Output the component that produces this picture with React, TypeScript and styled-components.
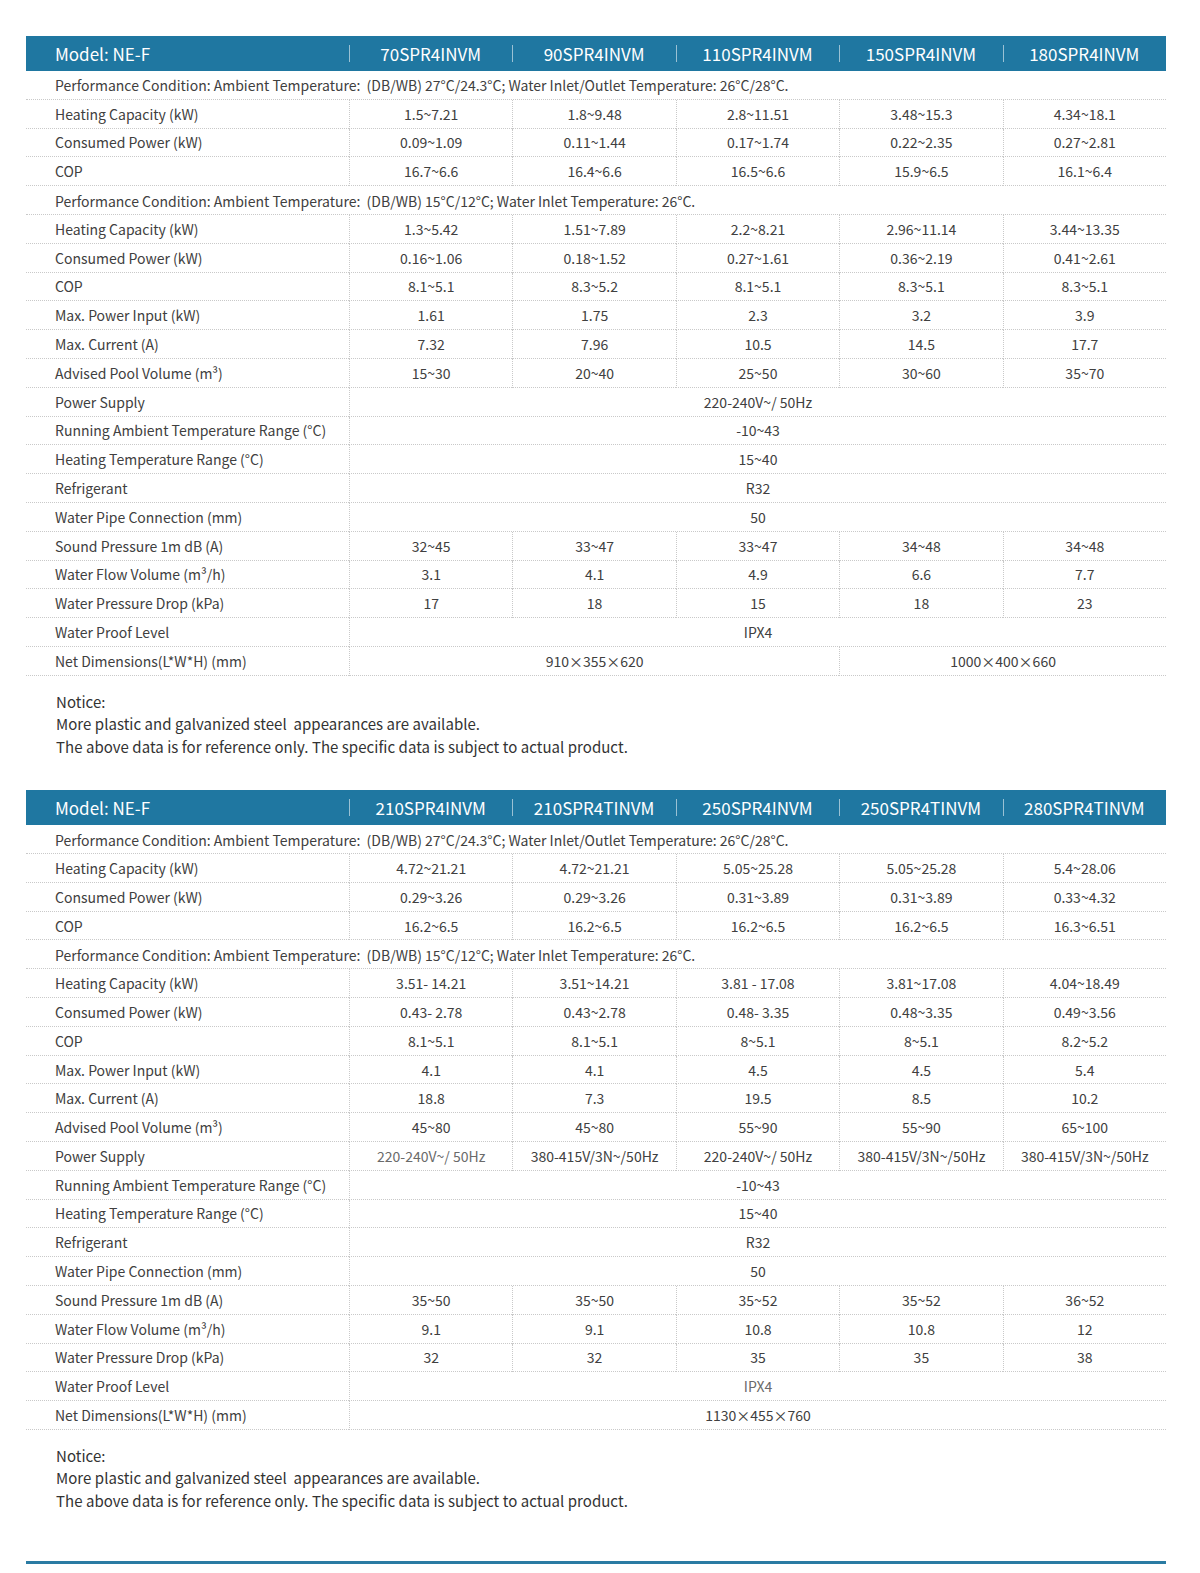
import React from "react";
import styled, { createGlobalStyle } from "styled-components";

const Global = createGlobalStyle`
  html, body { margin: 0; padding: 0; background: #ffffff; }
  body { font-family: "Noto Sans CJK SC", "Noto Sans", sans-serif; color: #333; }
`;

const Page = styled.div`
  width: 1200px;
  padding: 36px 0 0 26px;
  box-sizing: border-box;
`;

const Table = styled.div`
  width: 1140px;
  display: grid;
  grid-template-columns: 323px repeat(5, 1fr);
  grid-template-rows: 35px;
  grid-auto-rows: 28.8px;
`;

const HeadCell = styled.div<{ $first?: boolean }>`
  position: relative;
  background: #1f77a1;
  color: #ffffff;
  font-size: 17px;
  display: flex;
  align-items: center;
  justify-content: ${(p) => (p.$first ? "flex-start" : "center")};
  padding-left: ${(p) => (p.$first ? "29px" : "0")};
  &::before {
    content: "";
    display: ${(p) => (p.$first ? "none" : "block")};
    position: absolute;
    left: 0;
    top: 9px;
    width: 1px;
    height: 17px;
    background: rgba(255, 255, 255, 0.55);
  }
`;

const HeadRow = styled.div`
  display: contents;
`;

const Cell = styled.div<{ $span?: number; $first?: boolean; $light?: boolean }>`
  grid-column: span ${(p) => p.$span ?? 1};
  box-sizing: border-box;
  border-bottom: 1px dotted #c9c9c9;
  border-left: ${(p) => (p.$first ? "none" : "1px dotted #c9c9c9")};
  display: flex;
  align-items: center;
  justify-content: ${(p) => (p.$first ? "flex-start" : "center")};
  padding-left: ${(p) => (p.$first ? "29px" : "0")};
  font-size: 14px;
  color: ${(p) => (p.$light ? "#6a6a6a" : "#404040")};
  white-space: nowrap;
`;

const CondCell = styled.div`
  grid-column: 1 / -1;
  box-sizing: border-box;
  border-bottom: 1px dotted #c9c9c9;
  display: flex;
  align-items: center;
  padding-left: 29px;
  padding-top: 1px;
  font-size: 14px;
  color: #404040;
  white-space: pre;
`;

const Notice = styled.div<{ $top: number; $bottom: number }>`
  margin: ${(p) => p.$top}px 0 ${(p) => p.$bottom}px 30px;
  font-size: 15px;
  line-height: 22.5px;
  color: #333;
  white-space: pre;
  letter-spacing: 0.04px;
`;

const BottomRule = styled.div`
  width: 1140px;
  height: 3px;
  background: #2a7ba3;
`;

type V = string | { v: string; span?: number; light?: boolean };
type Row = { cond: string } | { label: string; values: V[] };

const cond1 =
  "Performance Condition: Ambient Temperature:  (DB/WB) 27°C/24.3°C; Water Inlet/Outlet Temperature: 26°C/28°C.";
const cond2 =
  "Performance Condition: Ambient Temperature:  (DB/WB) 15°C/12°C; Water Inlet Temperature: 26°C.";

const full = (v: string, light = false): V[] => [{ v, span: 5, light }];

const table1: { heads: string[]; rows: Row[] } = {
  heads: ["70SPR4INVM", "90SPR4INVM", "110SPR4INVM", "150SPR4INVM", "180SPR4INVM"],
  rows: [
    { cond: cond1 },
    { label: "Heating Capacity (kW)", values: ["1.5~7.21", "1.8~9.48", "2.8~11.51", "3.48~15.3", "4.34~18.1"] },
    { label: "Consumed Power (kW)", values: ["0.09~1.09", "0.11~1.44", "0.17~1.74", "0.22~2.35", "0.27~2.81"] },
    { label: "COP", values: ["16.7~6.6", "16.4~6.6", "16.5~6.6", "15.9~6.5", "16.1~6.4"] },
    { cond: cond2 },
    { label: "Heating Capacity (kW)", values: ["1.3~5.42", "1.51~7.89", "2.2~8.21", "2.96~11.14", "3.44~13.35"] },
    { label: "Consumed Power (kW)", values: ["0.16~1.06", "0.18~1.52", "0.27~1.61", "0.36~2.19", "0.41~2.61"] },
    { label: "COP", values: ["8.1~5.1", "8.3~5.2", "8.1~5.1", "8.3~5.1", "8.3~5.1"] },
    { label: "Max. Power Input (kW)", values: ["1.61", "1.75", "2.3", "3.2", "3.9"] },
    { label: "Max. Current (A)", values: ["7.32", "7.96", "10.5", "14.5", "17.7"] },
    { label: "Advised Pool Volume (m³)", values: ["15~30", "20~40", "25~50", "30~60", "35~70"] },
    { label: "Power Supply", values: full("220-240V~/ 50Hz") },
    { label: "Running Ambient Temperature Range (°C)", values: full("-10~43") },
    { label: "Heating Temperature Range (°C)", values: full("15~40") },
    { label: "Refrigerant", values: full("R32") },
    { label: "Water Pipe Connection (mm)", values: full("50") },
    { label: "Sound Pressure 1m dB (A)", values: ["32~45", "33~47", "33~47", "34~48", "34~48"] },
    { label: "Water Flow Volume (m³/h)", values: ["3.1", "4.1", "4.9", "6.6", "7.7"] },
    { label: "Water Pressure Drop (kPa)", values: ["17", "18", "15", "18", "23"] },
    { label: "Water Proof Level", values: full("IPX4") },
    {
      label: "Net Dimensions(L*W*H) (mm)",
      values: [
        { v: "910×355×620", span: 3 },
        { v: "1000×400×660", span: 2 },
      ],
    },
  ],
};

const table2: { heads: string[]; rows: Row[] } = {
  heads: ["210SPR4INVM", "210SPR4TINVM", "250SPR4INVM", "250SPR4TINVM", "280SPR4TINVM"],
  rows: [
    { cond: cond1 },
    { label: "Heating Capacity (kW)", values: ["4.72~21.21", "4.72~21.21", "5.05~25.28", "5.05~25.28", "5.4~28.06"] },
    { label: "Consumed Power (kW)", values: ["0.29~3.26", "0.29~3.26", "0.31~3.89", "0.31~3.89", "0.33~4.32"] },
    { label: "COP", values: ["16.2~6.5", "16.2~6.5", "16.2~6.5", "16.2~6.5", "16.3~6.51"] },
    { cond: cond2 },
    { label: "Heating Capacity (kW)", values: ["3.51- 14.21", "3.51~14.21", "3.81 - 17.08", "3.81~17.08", "4.04~18.49"] },
    { label: "Consumed Power (kW)", values: ["0.43- 2.78", "0.43~2.78", "0.48- 3.35", "0.48~3.35", "0.49~3.56"] },
    { label: "COP", values: ["8.1~5.1", "8.1~5.1", "8~5.1", "8~5.1", "8.2~5.2"] },
    { label: "Max. Power Input (kW)", values: ["4.1", "4.1", "4.5", "4.5", "5.4"] },
    { label: "Max. Current (A)", values: ["18.8", "7.3", "19.5", "8.5", "10.2"] },
    { label: "Advised Pool Volume (m³)", values: ["45~80", "45~80", "55~90", "55~90", "65~100"] },
    {
      label: "Power Supply",
      values: [
        { v: "220-240V~/ 50Hz", light: true },
        "380-415V/3N~/50Hz",
        "220-240V~/ 50Hz",
        "380-415V/3N~/50Hz",
        "380-415V/3N~/50Hz",
      ],
    },
    { label: "Running Ambient Temperature Range (°C)", values: full("-10~43") },
    { label: "Heating Temperature Range (°C)", values: full("15~40") },
    { label: "Refrigerant", values: full("R32") },
    { label: "Water Pipe Connection (mm)", values: full("50") },
    { label: "Sound Pressure 1m dB (A)", values: ["35~50", "35~50", "35~52", "35~52", "36~52"] },
    { label: "Water Flow Volume (m³/h)", values: ["9.1", "9.1", "10.8", "10.8", "12"] },
    { label: "Water Pressure Drop (kPa)", values: ["32", "32", "35", "35", "38"] },
    { label: "Water Proof Level", values: full("IPX4", true) },
    { label: "Net Dimensions(L*W*H) (mm)", values: full("1130×455×760") },
  ],
};

const noticeText =
  "Notice:\nMore plastic and galvanized steel  appearances are available.\nThe above data is for reference only. The specific data is subject to actual product.";

function SpecTable({ data }: { data: { heads: string[]; rows: Row[] } }) {
  return (
    <Table>
      <HeadRow>
        <HeadCell $first>Model: NE-F</HeadCell>
        {data.heads.map((h) => (
          <HeadCell key={h}>{h}</HeadCell>
        ))}
      </HeadRow>
      {data.rows.map((r, i) =>
        "cond" in r ? (
          <CondCell key={i}>{r.cond}</CondCell>
        ) : (
          <React.Fragment key={i}>
            <Cell $first>{r.label}</Cell>
            {r.values.map((v, j) =>
              typeof v === "string" ? (
                <Cell key={j}>{v}</Cell>
              ) : (
                <Cell key={j} $span={v.span} $light={v.light}>
                  {v.v}
                </Cell>
              )
            )}
          </React.Fragment>
        )
      )}
    </Table>
  );
}

export default function App() {
  return (
    <>
      <Global />
      <Page>
        <SpecTable data={table1} />
        <Notice $top={15} $bottom={32}>{noticeText}</Notice>
        <SpecTable data={table2} />
        <Notice $top={15} $bottom={49}>{noticeText}</Notice>
        <BottomRule />
      </Page>
    </>
  );
}
